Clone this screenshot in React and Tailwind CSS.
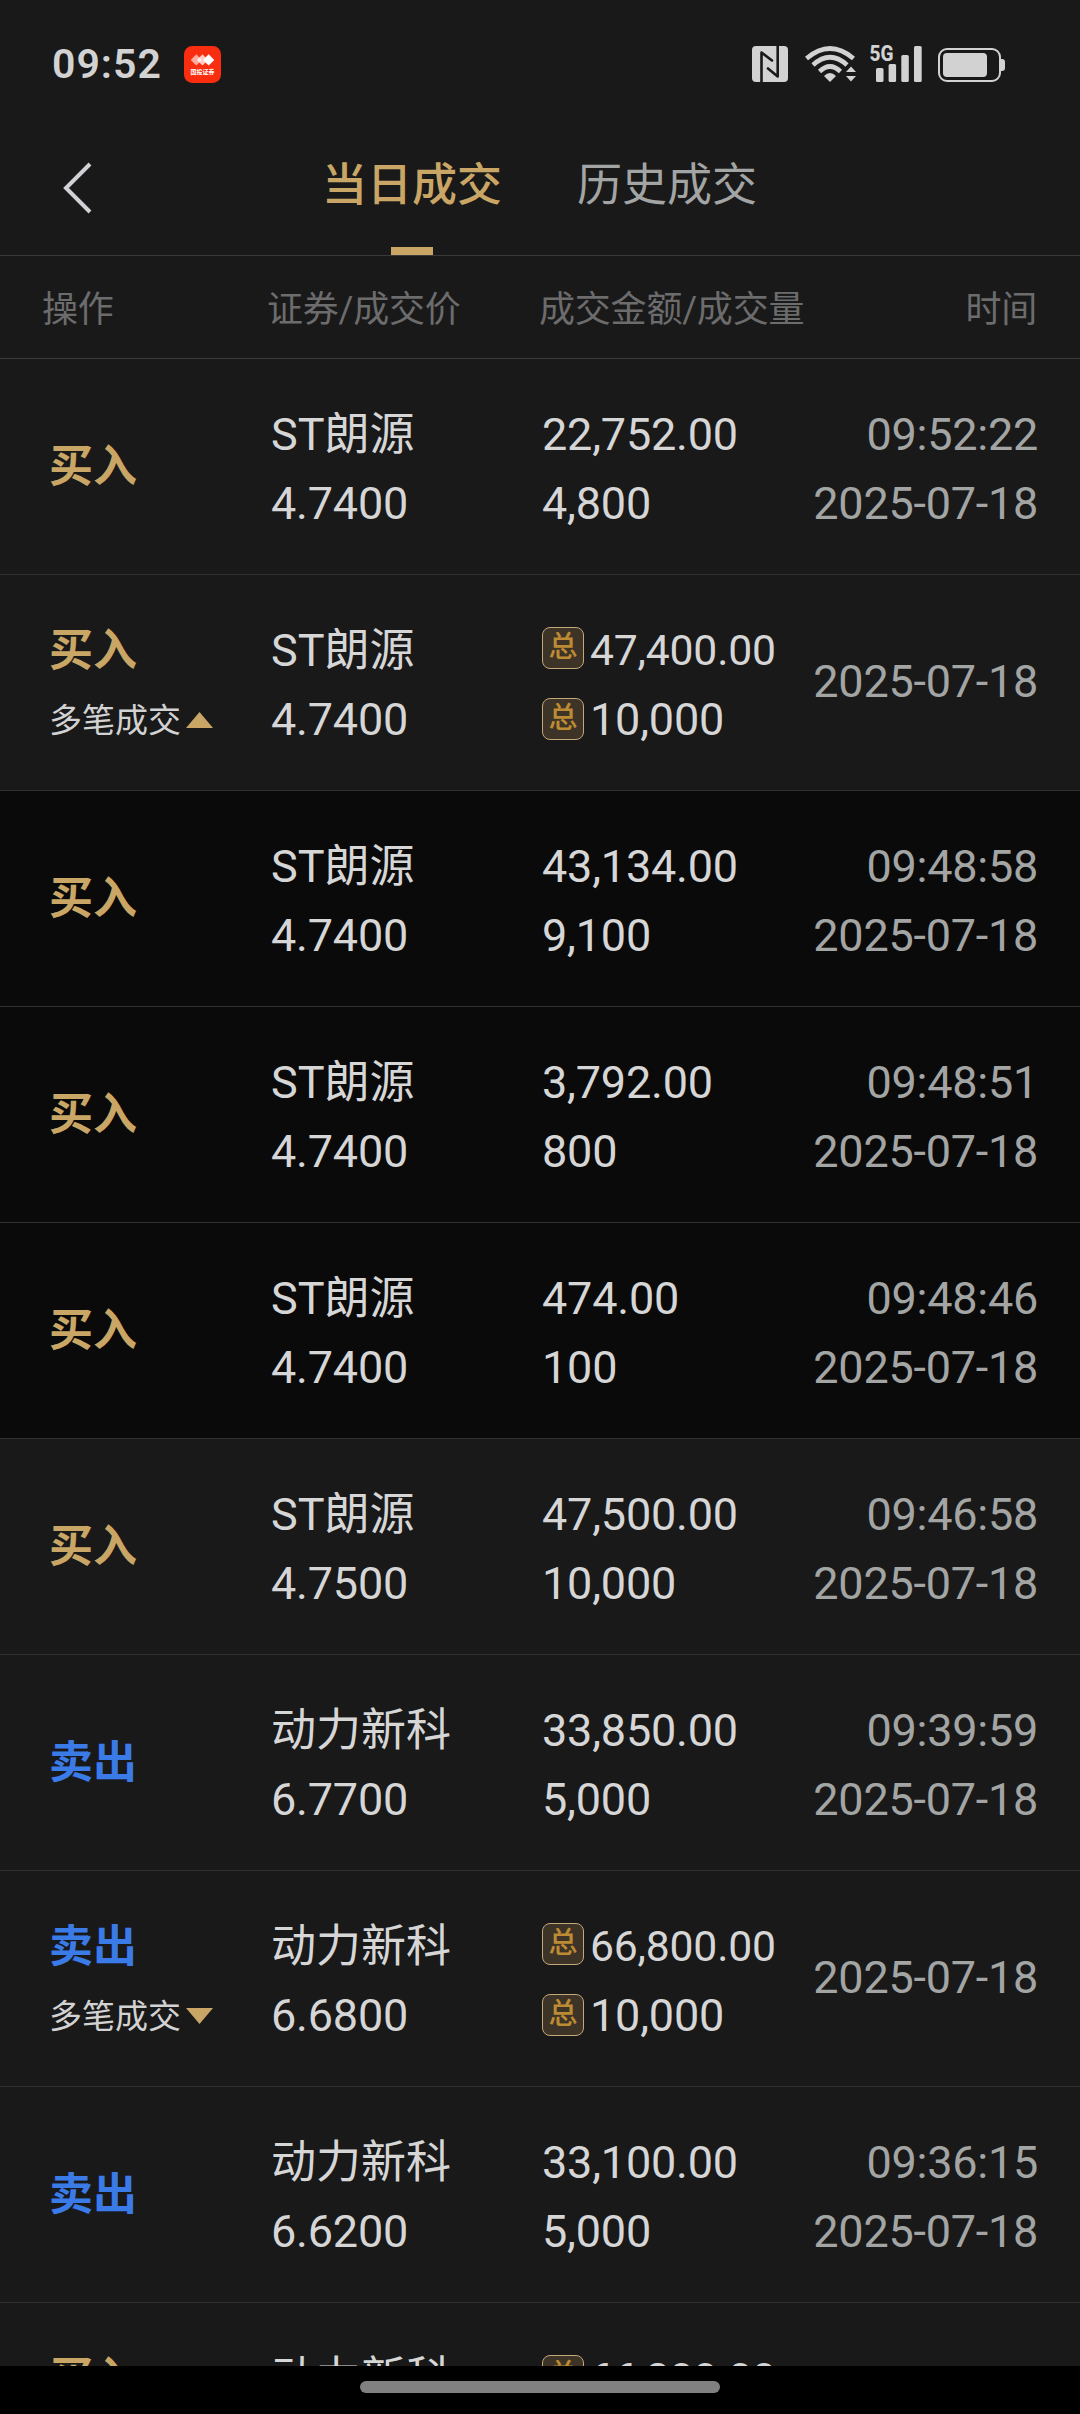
import { useState } from "react";

const trades = [
  { side: "buy", name: "ST朗源", price: "4.7400", amount: "22,752.00", volume: "4,800", time: "09:52:22" },
  { side: "buy", name: "ST朗源", price: "4.7400", amount: "47,400.00", volume: "10,000", group: true, open: true },
  { side: "buy", name: "ST朗源", price: "4.7400", amount: "43,134.00", volume: "9,100", time: "09:48:58", child: true },
  { side: "buy", name: "ST朗源", price: "4.7400", amount: "3,792.00", volume: "800", time: "09:48:51", child: true },
  { side: "buy", name: "ST朗源", price: "4.7400", amount: "474.00", volume: "100", time: "09:48:46", child: true },
  { side: "buy", name: "ST朗源", price: "4.7500", amount: "47,500.00", volume: "10,000", time: "09:46:58" },
  { side: "sell", name: "动力新科", price: "6.7700", amount: "33,850.00", volume: "5,000", time: "09:39:59" },
  { side: "sell", name: "动力新科", price: "6.6800", amount: "66,800.00", volume: "10,000", group: true },
  { side: "sell", name: "动力新科", price: "6.6200", amount: "33,100.00", volume: "5,000", time: "09:36:15" },
  { side: "buy", name: "动力新科", price: "6.6200", amount: "66,200.00", volume: "10,000", group: true },
];

const tradeDate = "2025-07-18";

const sides = {
  buy: { label: "买入", color: "text-[#c9a665]" },
  sell: { label: "卖出", color: "text-[#3a7be8]" },
};

function AppBadge() {
  return (
    <svg className="ml-[22px] h-[37px] w-[37px]" viewBox="0 0 36 36">
      <rect width="36" height="36" rx="8" fill="#f92d10" />
      <path d="M12 8l5.5 5.5L12 19l-5.5-5.5z" fill="#fff" opacity=".6" />
      <path d="M18 8l5.5 5.5L18 19l-5.5-5.5z" fill="#fff" opacity=".75" />
      <path d="M24 8l5.5 5.5L24 19l-5.5-5.5z" fill="#fff" />
      <text x="18" y="27" textAnchor="middle" fontSize="5.8" fontWeight="700" fill="#fff">
        国投证券
      </text>
    </svg>
  );
}

function StatusIcons() {
  return (
    <svg className="h-10 w-[256px]" viewBox="752 44 256 40" fill="#d2d2d2">
      {/* NFC */}
      <rect x="752" y="46" width="36" height="36" rx="4" />
      <path
        d="M761.5 83V52.5L772 60.5M777.7 45v31.5L768 68.5"
        fill="none"
        stroke="#19191a"
        strokeWidth="2.6"
        strokeLinejoin="round"
        strokeLinecap="round"
      />
      {/* WIFI */}
      <g fill="none" stroke="#d2d2d2" strokeWidth="4.6">
        <path d="M806.5 58.5Q830 38.5 853.5 58.5" />
        <path d="M813 65Q830 49.5 847 65" />
        <path d="M819.5 71.5Q830 61.5 840.5 71.5" />
      </g>
      <path d="M824 76q6-6 12 0l-6 6z" />
      <path d="M851 66.5l5 5.5h-10zM851 81.5l5-5.5h-10z" />
      {/* SIGNAL */}
      <text x="869.5" y="61" fontSize="22" fontWeight="800" textLength="24" lengthAdjust="spacingAndGlyphs">
        5G
      </text>
      <rect x="876" y="68" width="7.5" height="14" rx="1.5" />
      <rect x="888.6" y="64" width="7.5" height="18" rx="1.5" />
      <rect x="901.3" y="55" width="7.5" height="27" rx="1.5" />
      <rect x="914" y="46" width="7.7" height="36" rx="1.5" />
      {/* BATTERY */}
      <rect x="939" y="49" width="61" height="32" rx="8" fill="none" stroke="#d2d2d2" strokeWidth="2" />
      <rect x="943" y="53" width="44" height="24" rx="4" />
      <path d="M1001 59h1q3 0 3 3v6q0 3-3 3h-1z" />
    </svg>
  );
}

function TotalBadge({ className }) {
  return (
    <span
      className={`flex h-[42px] w-[42px] items-center justify-center rounded-[8px] border border-[#c4a877] bg-[#3d3326] text-[29px] font-medium leading-none tracking-normal text-[#bd8b34] ${className}`}
    >
      总
    </span>
  );
}

function TradeRow({ trade }) {
  const side = sides[trade.side];

  return (
    <div
      className={`flex h-[216px] shrink-0 items-center border-b border-[#303031] pl-[49px] pr-[42px] leading-[69px] ${
        trade.child ? "bg-[#0a0a0a]" : ""
      }`}
    >
      <div className={`w-[222px] ${trade.group ? "pt-[6px]" : "pt-[2px]"}`}>
        <div className={`text-[44px] font-bold ${side.color}`}>{side.label}</div>
        {trade.group && (
          <div className="flex h-[69px] items-center text-[33px] text-[#d2d2d2]">
            多笔成交
            <svg className="ml-[5px] h-4 w-[27px]" viewBox="0 0 27 16" fill="#c9a665">
              {trade.open ? <path d="M13.5 0L27 16H0z" /> : <path d="M13.5 16L27 0H0z" />}
            </svg>
          </div>
        )}
      </div>
      <div className="w-[271px] pt-[5px] text-[#d6d6d6]">
        <div>{trade.name}</div>
        <div className="tracking-[-0.2px]">{trade.price}</div>
      </div>
      <div className="flex-1 pt-[5px] tracking-[-0.2px] text-[#d6d6d6]">
        <div className="flex items-center gap-[6px]">
          {trade.group && <TotalBadge className="mb-[6px]" />}
          <span className={trade.group ? "text-[42.7px]" : ""}>{trade.amount}</span>
        </div>
        <div className="flex items-center gap-[6px]">
          {trade.group && <TotalBadge className="mb-[2px]" />}
          <span>{trade.volume}</span>
        </div>
      </div>
      <div
        className={`text-right tracking-[-0.25px] text-[#a3a5a4] ${trade.group ? "pb-[2px]" : "pt-[5px]"}`}
      >
        {trade.time && <div>{trade.time}</div>}
        <div>{tradeDate}</div>
      </div>
    </div>
  );
}

export default function App() {
  const [tab, setTab] = useState("today");

  const tabs = [
    { id: "today", label: "当日成交" },
    { id: "history", label: "历史成交" },
  ];

  return (
    <div className="flex h-[2414px] w-[1080px] flex-col overflow-hidden bg-[#19191a] font-[Roboto,'Noto_Sans_CJK_SC',sans-serif] text-[45px]">
      {/* STATUS BAR */}
      <div className="flex h-[128px] shrink-0 items-center pl-[52px] pr-[72px]">
        <span className="text-[41px] font-semibold leading-none tracking-[1px] text-[#d2d2d2]">09:52</span>
        <AppBadge />
        <div className="ml-auto">
          <StatusIcons />
        </div>
      </div>

      {/* TABS */}
      <div className="flex h-[128px] shrink-0 border-b border-[#3a3a3b]">
        <button className="flex w-[322px] items-center pl-[61px] pb-[7px]">
          <svg className="h-[54px] w-8" viewBox="0 0 32 54" fill="none" stroke="#d2d2d6" strokeWidth="4">
            <path d="M29 3L5 27l24 24" />
          </svg>
        </button>
        <div className="flex gap-[75px]">
          {tabs.map((t) => (
            <button
              key={t.id}
              onClick={() => setTab(t.id)}
              className={`flex flex-col items-center justify-between pt-[25px] leading-[66px] ${
                tab === t.id ? "font-medium text-[#c9a665]" : "text-[#a3a5a4]"
              }`}
            >
              {t.label}
              {tab === t.id && <span className="h-2 w-[42px] bg-[#c9a665]" />}
            </button>
          ))}
        </div>
      </div>

      {/* COLUMN TITLES */}
      <div className="flex h-[103px] shrink-0 items-center border-b border-[#3a3a3b] pl-[42px] pr-[43px] pt-[5px] text-[36px] tracking-[-0.2px] text-[#6c6c6d]">
        <span className="w-[225px]">操作</span>
        <span className="w-[272px]">证券/成交价</span>
        <span className="flex-1">成交金额/成交量</span>
        <span>时间</span>
      </div>

      {/* TRADE LIST */}
      <div className="flex min-h-0 flex-1 flex-col overflow-hidden">
        {trades.map((trade, i) => (
          <TradeRow key={i} trade={trade} />
        ))}
      </div>

      {/* HOME INDICATOR */}
      <div className="flex h-12 shrink-0 justify-center bg-black pt-[15px]">
        <div className="h-3 w-[360px] rounded-full bg-[#808080]" />
      </div>
    </div>
  );
}
